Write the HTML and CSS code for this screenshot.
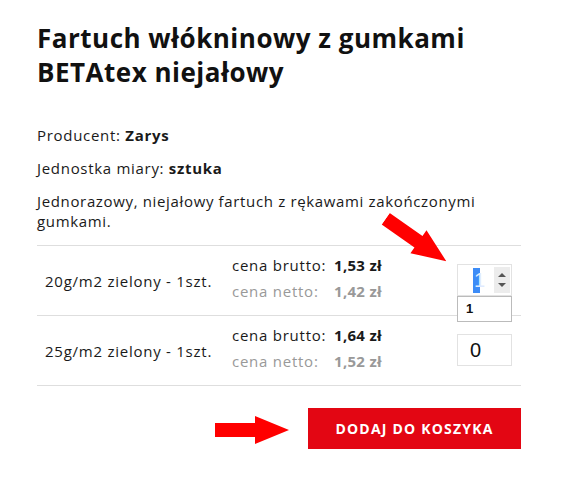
FILE: index.html
```html
<!DOCTYPE html>
<html lang="pl">
<head>
<meta charset="utf-8">
<link rel="stylesheet" href="styles.css">
</head>
<body>
<div class="product">
  <h1 class="title">Fartuch włókninowy z gumkami BETAtex niejałowy</h1>
  <p class="meta">Producent: <b>Zarys</b></p>
  <p class="meta">Jednostka miary: <b>sztuka</b></p>
  <p class="desc">Jednorazowy, niejałowy fartuch z rękawami zakończonymi gumkami.</p>
  <div class="variants">
    <div class="row">
      <div class="name">20g/m2 zielony - 1szt.</div>
      <div class="prices">
        <div class="price gross"><span class="lbl">cena brutto:</span><b>1,53 zł</b></div>
        <div class="price net"><span class="lbl">cena netto:</span><b>1,42 zł</b></div>
      </div>
      <div class="qty">
        <div class="input focused">
          <span class="sel">1</span>
          <span class="spin"><svg width="16" height="26" viewBox="0 0 16 26"><path d="M4 10 L8 6 L12 10 Z" fill="#555"/><path d="M4 16 L8 20 L12 16 Z" fill="#555"/></svg></span>
        </div>
        <div class="suggest">1</div>
      </div>
    </div>
    <div class="row">
      <div class="name">25g/m2 zielony - 1szt.</div>
      <div class="prices">
        <div class="price gross"><span class="lbl">cena brutto:</span><b>1,64 zł</b></div>
        <div class="price net"><span class="lbl">cena netto:</span><b>1,52 zł</b></div>
      </div>
      <div class="qty">
        <div class="input"><span class="val">0</span></div>
      </div>
    </div>
  </div>
  <div class="actions">
    <button class="add">DODAJ DO KOSZYKA</button>
  </div>
</div>
<svg class="arrow arrow-diag" width="74" height="30" viewBox="0 0 74 30"><path d="M0 8 L40 8 L40 1 L74 15 L40 29 L40 22 L0 22 Z" fill="#ff0000"/></svg>
<svg class="arrow arrow-right" width="74" height="30" viewBox="0 0 74 30"><path d="M0 8 L40 8 L40 1 L74 15 L40 29 L40 22 L0 22 Z" fill="#ff0000"/></svg>
</body>
</html>
```
FILE: styles.css
```css
html, body {
  margin: 0;
  padding: 0;
  background: #fff;
}
body {
  font-family: "Open Sans", "Noto Sans", sans-serif;
  color: #1a1a1a;
  position: relative;
  width: 567px;
  height: 477px;
  overflow: hidden;
}
.product {
  width: 484px;
  padding: 21px 0 0 37px;
}
.title {
  margin: 0 0 36px;
  font-size: 26px;
  line-height: 34px;
  font-weight: 700;
  color: #111;
  letter-spacing: 0.5px;
}
.meta {
  margin: 0 0 12px;
  font-size: 15px;
  line-height: 21px;
  letter-spacing: 0.7px;
}
.meta b {
  font-weight: 700;
}
.desc {
  margin: 0 0 14px;
  font-size: 15px;
  line-height: 20px;
  letter-spacing: 0.65px;
}
.variants {
  border-top: 1px solid #dedede;
}
.row {
  display: flex;
  align-items: center;
  height: 69px;
  border-bottom: 1px solid #dedede;
}
.name {
  width: 187px;
  padding-left: 8px;
  font-size: 15px;
  letter-spacing: 0.75px;
}
.prices {
  width: 225px;
  display: flex;
  flex-direction: column;
  gap: 5px;
  align-self: flex-start;
  padding-top: 9px;
}
.price {
  display: flex;
  font-size: 15px;
  line-height: 21px;
  letter-spacing: 0.75px;
}
.price .lbl {
  width: 102px;
}
.price b {
  font-weight: 700;
  letter-spacing: 0.3px;
}
.net {
  color: #999;
}
.qty {
  position: relative;
  align-self: flex-start;
  padding-top: 18px;
}
.input {
  width: 53px;
  height: 30px;
  border: 1px solid #e2e2e2;
  display: flex;
  align-items: center;
  font-family: "Liberation Sans", Arial, sans-serif;
  font-size: 20px;
}
.focused .sel {
  display: inline-block;
  margin-left: 15px;
  padding-left: 1px;
  background: #3d8cf7;
  color: #dfeaff;
  font-size: 20px;
  line-height: 25px;
  letter-spacing: -5px;
  width: 6px;
}
.spin {
  margin-left: auto;
  margin-right: 1px;
  width: 16px;
  height: 26px;
  background: #ececec;
  display: flex;
}
.input .val {
  margin-left: 12px;
  color: #111;
}
.suggest {
  position: absolute;
  left: 0;
  top: 50px;
  width: 45px;
  height: 24px;
  padding-left: 8px;
  border: 1px solid #bbbbbb;
  background: #fff;
  font-family: "Liberation Sans", Arial, sans-serif;
  font-size: 13px;
  font-weight: 700;
  line-height: 24px;
  color: #111;
  z-index: 2;
}
.actions {
  display: flex;
  justify-content: flex-end;
  padding-top: 22px;
}
.add {
  width: 213px;
  height: 41px;
  border: 0;
  background: #e30613;
  color: #fff;
  font-family: "Open Sans", sans-serif;
  font-size: 14px;
  font-weight: 700;
  letter-spacing: 1.2px;
  padding: 0;
}
.arrow {
  position: absolute;
}
.arrow-right {
  left: 215px;
  top: 415px;
}
.arrow-diag {
  left: 379px;
  top: 225px;
  transform: rotate(35deg);
}
```
